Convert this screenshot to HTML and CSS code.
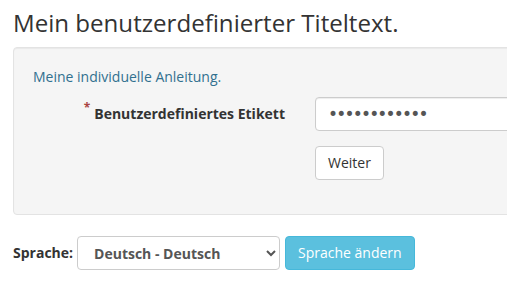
FILE: index.html
```html
<!DOCTYPE html>
<html lang="de">
<head>
    <meta charset="UTF-8">
    <meta name="viewport" content="width=device-width, initial-scale=1.0">
    <title>Anmeldung</title>
    <link rel="stylesheet" href="styles.css">
</head>
<body>
    <!-- Page title -->
    <h1 class="page_title">Mein benutzerdefinierter Titeltext.</h1>

    <!-- Grey box with instruction and form -->
    <div class="well">
        <p class="info_text">Meine individuelle Anleitung.</p>
        <form class="form_horizontal" action="#" method="post">
            <div class="form_row">
                <label class="control_label" for="custom_field"><span class="req">*</span>Benutzerdefiniertes Etikett</label>
                <div class="control_col">
                    <input type="password" id="custom_field" class="form_control pw" value="123456789012">
                </div>
            </div>
            <div class="form_row">
                <div class="control_col offset">
                    <button type="submit" class="btn btn_default">Weiter</button>
                </div>
            </div>
        </form>
    </div>

    <!-- Language switcher -->
    <form class="lang_form" action="#" method="get">
        <label class="lang_label" for="lang">Sprache:</label>
        <select id="lang" class="lang_select">
            <option>Deutsch - Deutsch</option>
            <option>English - Englisch</option>
        </select>
        <button type="submit" class="btn btn_info">Sprache ändern</button>
    </form>
</body>
</html>
```

FILE: styles.css
```css
/* Base page settings */
body {
    font-family: "Open Sans", "Liberation Sans", sans-serif;
    font-size: 14px;
    line-height: 20px;
    color: #333;
    background-color: #fff;
    margin: 0;
    padding: 0 0 0 13px;
    overflow: hidden;
}
/* Big heading on top */
.page_title {
    font-size: 24.1px;
    font-weight: 400;
    line-height: 26px;
    margin: 10px 0 11px 0;
}
/* Grey box */
.well {
    background-color: #f5f5f5;
    border: 1px solid #e3e3e3;
    border-radius: 4px;
    padding: 19px;
    width: 560px;
    box-shadow: inset 0 1px 1px rgba(0, 0, 0, 0.05);
}
.info_text {
    color: #31708f;
    margin: 0 0 10px 0;
}
/* Two column form */
.form_row {
    display: grid;
    grid-template-columns: 252px 1fr;
    column-gap: 30px;
    margin-bottom: 15px;
}
.control_label {
    text-align: right;
    font-weight: 700;
    padding-top: 7px;
}
.req {
    color: #a94442;
    font-size: 12px;
    position: relative;
    top: -7px;
    margin-right: 4px;
}
.offset {
    grid-column: 2;
}
.form_control {
    box-sizing: border-box;
    width: 100%;
    height: 34px;
    padding: 6px 12px;
    font-family: inherit;
    font-size: 14px;
    color: #555;
    background-color: #fff;
    border: 1px solid #ccc;
    border-radius: 4px;
    box-shadow: inset 0 1px 1px rgba(0, 0, 0, 0.075);
}
/* Bigger mask dots in the password field */
.pw {
    font-family: "DejaVu Sans", sans-serif;
    font-size: 17px;
    letter-spacing: -1.8px;
}
/* Buttons */
.btn {
    box-sizing: border-box;
    height: 34px;
    padding: 6px 12px;
    font-family: inherit;
    font-size: 14px;
    line-height: 20px;
    border: 1px solid transparent;
    border-radius: 4px;
    cursor: pointer;
}
.btn_default {
    background-color: #fff;
    border-color: #ccc;
    color: #333;
}
.btn_info {
    background-color: #5bc0de;
    border-color: #46b8da;
    color: #fff;
}
/* Language row */
.lang_form {
    display: flex;
    align-items: center;
    gap: 5px;
    margin-top: 21px;
}
.lang_label {
    font-weight: 700;
    margin-right: -1px;
}
.lang_select {
    box-sizing: border-box;
    width: 203px;
    height: 34px;
    padding: 6px 12px;
    font-family: inherit;
    font-size: 14px;
    font-weight: 700;
    color: #555;
    background-color: #fff;
    border: 1px solid #ccc;
    border-radius: 4px;
}
```
